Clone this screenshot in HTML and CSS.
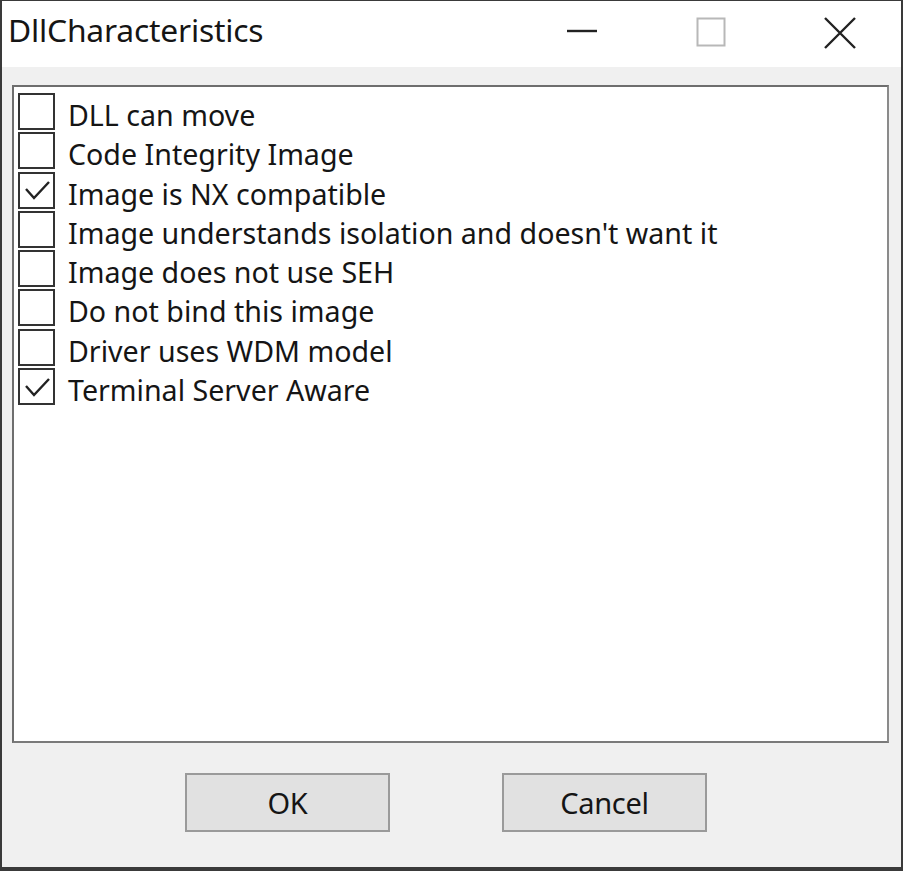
FILE: index.html
```html
<!DOCTYPE html>
<html>
<head>
<meta charset="utf-8">
<link rel="stylesheet" href="styles.css">
</head>
<body>
<div class="window">
  <div class="titlebar">
    <div class="title">DllCharacteristics</div>
    <div class="controls">
      <div class="ctl ctl-min"><svg width="32" height="4" viewBox="0 0 32 4"><line x1="1" y1="2" x2="31" y2="2" stroke="#222" stroke-width="2.4"/></svg></div>
      <div class="ctl ctl-max"><svg width="30" height="30" viewBox="0 0 30 30"><rect x="1.5" y="1.5" width="27" height="27" fill="none" stroke="#b8b8b8" stroke-width="2"/></svg></div>
      <div class="ctl ctl-close"><svg width="34" height="32" viewBox="0 0 34 32"><path d="M2 1 L32 31 M32 1 L2 31" stroke="#222" stroke-width="2.4" fill="none"/></svg></div>
    </div>
  </div>
  <div class="body">
    <div class="listbox">
      <div class="item"><span class="box"></span><span class="label">DLL can move</span></div>
      <div class="item"><span class="box"></span><span class="label">Code Integrity Image</span></div>
      <div class="item"><span class="box checked"><svg width="32" height="32" viewBox="0 0 32 32"><path d="M5 15 L13 24 L28 8" stroke="#222" stroke-width="2.4" fill="none"/></svg></span><span class="label">Image is NX compatible</span></div>
      <div class="item"><span class="box"></span><span class="label">Image understands isolation and doesn't want it</span></div>
      <div class="item"><span class="box"></span><span class="label">Image does not use SEH</span></div>
      <div class="item"><span class="box"></span><span class="label">Do not bind this image</span></div>
      <div class="item"><span class="box"></span><span class="label">Driver uses WDM model</span></div>
      <div class="item"><span class="box checked"><svg width="32" height="32" viewBox="0 0 32 32"><path d="M5 15 L13 24 L28 8" stroke="#222" stroke-width="2.4" fill="none"/></svg></span><span class="label">Terminal Server Aware</span></div>
    </div>
    <div class="buttons">
      <div class="btn">OK</div>
      <div class="btn">Cancel</div>
    </div>
  </div>
</div>
</body>
</html>
```
FILE: styles.css
```css
html, body {
  margin: 0;
  padding: 0;
  background: #f0f0f0;
}
.window {
  width: 903px;
  height: 871px;
  box-sizing: border-box;
  border: 2px solid #3a3a3a;
  border-top-width: 1px;
  border-bottom-width: 4px;
  background: #f0f0f0;
  display: flex;
  flex-direction: column;
  font-family: "Noto Sans", "Open Sans", sans-serif;
  color: #151515;
}
.titlebar {
  height: 66px;
  background: #ffffff;
  display: flex;
  align-items: flex-start;
  justify-content: space-between;
}
.title {
  font-size: 31.8px;
  line-height: 34px;
  padding-top: 12px;
  padding-left: 6px;
  letter-spacing: -0.2px;
}
.controls {
  display: flex;
  align-items: center;
  height: 66px;
}
.ctl {
  display: flex;
  align-items: center;
  justify-content: center;
}
.ctl-min {
  width: 32px;
  margin-right: 98px;
  margin-top: -6px;
}
.ctl-max {
  width: 30px;
  margin-right: 97px;
  margin-top: -4px;
}
.ctl-close {
  width: 34px;
  margin-right: 44px;
  margin-top: -3px;
}
.body {
  flex: 1;
  display: flex;
  flex-direction: column;
  padding: 18px 12px 0 10px;
}
.listbox {
  height: 658px;
  box-sizing: border-box;
  background: #ffffff;
  border: 2px solid #6e6e6e;
  border-right-color: #8a8a8a;
  border-bottom-color: #7a7a7a;
  padding: 6px 0 0 4px;
}
.item {
  height: 39.3px;
  display: flex;
  align-items: flex-start;
}
.box {
  width: 37px;
  height: 37px;
  box-sizing: border-box;
  border: 2px solid #333333;
  background: #ffffff;
  display: flex;
  align-items: center;
  justify-content: center;
  flex-shrink: 0;
}
.label {
  font-size: 28.6px;
  line-height: 39px;
  padding-top: 2px;
  padding-left: 13px;
  white-space: nowrap;
  letter-spacing: 0;
}
.buttons {
  display: flex;
  gap: 112px;
  padding-left: 173px;
  padding-top: 30px;
}
.btn {
  width: 205px;
  height: 59px;
  box-sizing: border-box;
  border: 2px solid #9a9a9a;
  background: #e1e1e1;
  display: flex;
  align-items: center;
  justify-content: center;
  font-size: 29px;
  letter-spacing: -0.3px;
}
```
